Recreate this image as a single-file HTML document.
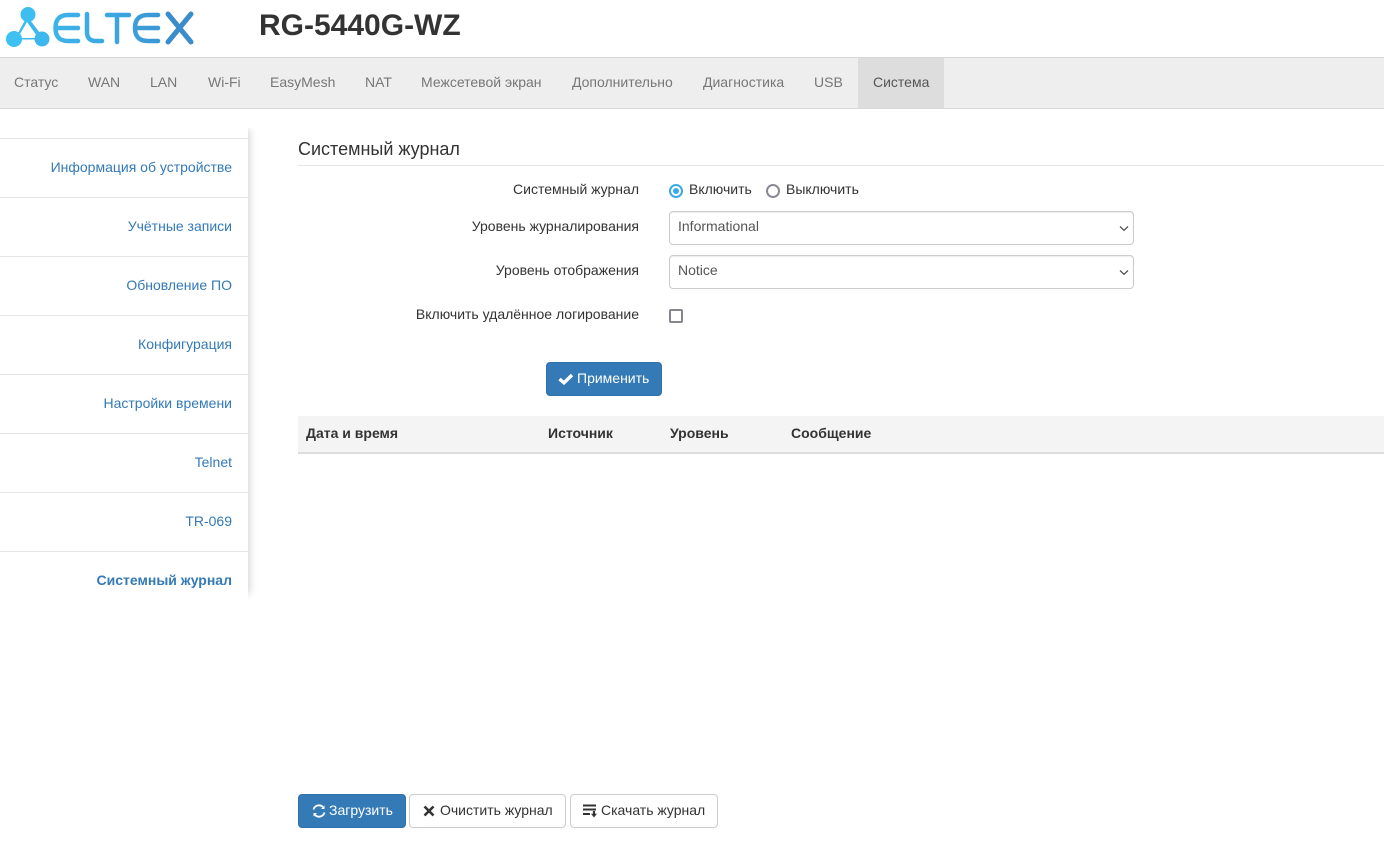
<!DOCTYPE html>
<html lang="ru"><head><meta charset="utf-8"><title>RG-5440G-WZ</title>
<style>
*{box-sizing:border-box}
html,body{margin:0;padding:0;background:#fff}
body{width:1384px;height:842px;position:relative;overflow:hidden;font:14px/20px "Liberation Sans",sans-serif;color:#333}
.a{position:absolute;white-space:nowrap}
h1{position:absolute;left:259px;top:9px;margin:0;font-size:30px;line-height:33px;font-weight:700;color:#333}
#nav{position:absolute;left:0;top:57px;width:1384px;height:52px;background:#eee;border-top:1px solid #d8d8d8;border-bottom:1px solid #d8d8d8}
#nav span{position:absolute;top:14px;color:#777}
#nav .on{top:0;left:858px;width:86px;height:50px;background:#ddd;color:#555;padding:14px 0 0 15px}
#side{position:absolute;left:0;top:128px;width:248px;height:473px;padding-top:10px;background:#fff;box-shadow:5px -3px 8px -4px rgba(0,0,0,.2);clip-path:inset(0 -20px 0 0)}
#side div{height:59px;border-top:1px solid #e5e5e5;text-align:right;padding:18px 16px 0 0;color:#337ab7}
#side div.on{font-weight:700}
.lbl{right:745px}
.sel{position:absolute;left:669px;width:465px;height:34px;border:1px solid #ccc;border-radius:4px;background:#fff;color:#555;padding:4px 8px;box-shadow:inset 0 1px 1px rgba(0,0,0,.075)}
.sel svg{position:absolute;right:4px;top:13px}
.btn{position:absolute;height:34px;border:1px solid #ccc;border-radius:4px;background:#fff;color:#333;line-height:20px;padding:5px 12px;white-space:nowrap}
.pri{background:#337ab7;border-color:#3071a9;color:#fff}
.btn svg{position:absolute}
</style></head><body>

<svg class="a" style="left:0;top:0" width="200" height="50" viewBox="0 0 200 50">
<defs><linearGradient id="g" gradientUnits="userSpaceOnUse" x1="0" y1="0" x2="195" y2="0"><stop offset="0" stop-color="#3cc0f2"/><stop offset=".6" stop-color="#3ba5e0"/><stop offset="1" stop-color="#3a8aca"/></linearGradient></defs>
<g fill="none" stroke="url(#g)">
<path stroke-width="4.500" stroke-linecap="round" d="M78 15H68Q55.500 15 55.500 28Q55.500 41 68 41H78M57 28H78"/>
<path stroke-width="4.500" stroke-linecap="round" d="M87 14V32Q87 41 96 41H102"/>
<path stroke-width="4.500" stroke-linecap="round" d="M107 15H129M117 15V42"/>
<path stroke-width="4.500" stroke-linecap="round" d="M158 15H148Q135 15 135 28Q135 41 148 41H158M136 28H158"/>
<path stroke-width="5" stroke-linecap="round" stroke="#3a8cca" d="M168 14L191 42M191 14L168 42"/>
</g>
<path d="M25 20L18 33L20 34L27 22z" fill="#3dbdf0"/>
<path d="M30 20L27 22L37 36L40 33z" fill="#3cb8ee"/>
<path d="M18 38H38V39.500H18z" fill="#3dbaf0"/>
<circle cx="28" cy="14.500" r="7.500" fill="#3dbdf0"/><circle cx="14" cy="39" r="8" fill="#3dc0f2"/><circle cx="42" cy="39" r="7.500" fill="#3db8ee"/>
</svg>
<h1>RG-5440G-WZ</h1>

<div id="nav">
<span style="left:14px">Статус</span><span style="left:88px">WAN</span><span style="left:150px">LAN</span><span style="left:208px">Wi-Fi</span><span style="left:270px">EasyMesh</span><span style="left:365px">NAT</span><span style="left:421px">Межсетевой экран</span><span style="left:572px">Дополнительно</span><span style="left:703px">Диагностика</span><span style="left:814px">USB</span><span class="on">Система</span>
</div>

<div id="side">
<div>Информация об устройстве</div><div>Учётные записи</div><div>Обновление ПО</div><div>Конфигурация</div><div>Настройки времени</div><div>Telnet</div><div>TR-069</div><div class="on">Системный журнал</div>
</div>

<div class="a" style="left:298px;top:139px;font-size:18px;line-height:20px;color:#333">Системный журнал</div>
<div class="a" style="left:298px;top:165px;width:1086px;height:1px;background:#e5e5e5"></div>

<div class="a lbl" style="top:179px">Системный журнал</div>
<svg class="a" style="left:669px;top:184px" width="14" height="14"><circle cx="7" cy="7" r="6" fill="#fff" stroke="#3ba9e4" stroke-width="2"/><circle cx="7" cy="7" r="3" fill="#3ba9e4"/></svg>
<div class="a" style="left:689px;top:179px">Включить</div>
<svg class="a" style="left:766px;top:184px" width="14" height="14"><circle cx="7" cy="7" r="6" fill="#fff" stroke="#8a8a96" stroke-width="2"/></svg>
<div class="a" style="left:786px;top:179px">Выключить</div>

<div class="a lbl" style="top:216px">Уровень журналирования</div>
<div class="sel" style="top:211px">Informational<svg width="10" height="7" viewBox="0 0 10 7"><path d="M1 1.500L5 5.300L9 1.500" fill="none" stroke="#555" stroke-width="1.300"/></svg></div>
<div class="a lbl" style="top:260px">Уровень отображения</div>
<div class="sel" style="top:255px">Notice<svg width="10" height="7" viewBox="0 0 10 7"><path d="M1 1.500L5 5.300L9 1.500" fill="none" stroke="#555" stroke-width="1.300"/></svg></div>
<div class="a lbl" style="top:304px">Включить удалённое логирование</div>
<div class="a" style="left:669px;top:309px;width:14px;height:14px;border:2px solid #85858f;border-radius:2px"></div>

<div class="btn pri" style="left:546px;top:362px;width:116px;padding-left:30px">
<svg style="left:11px;top:10px" width="16" height="12" viewBox="0 0 16 12"><path d="M1.500 6L6 9.800L14 2" fill="none" stroke="#fff" stroke-width="3.400"/></svg>Применить</div>

<div class="a" style="left:298px;top:416px;width:1086px;height:38px;background:#f4f4f4;border-bottom:2px solid #ddd;font-weight:700">
<span class="a" style="left:8px;top:7px">Дата и время</span><span class="a" style="left:250px;top:7px">Источник</span><span class="a" style="left:372px;top:7px">Уровень</span><span class="a" style="left:493px;top:7px">Сообщение</span>
</div>

<div class="btn pri" style="left:298px;top:794px;width:108px;padding-left:30px">
<svg style="left:13px;top:9px" width="14" height="14" viewBox="0 0 14 14"><path d="M1.500 5.500A5.700 5.700 0 0 1 11 3M12.500 8.500A5.700 5.700 0 0 1 3 11" fill="none" stroke="#fff" stroke-width="1.800"/><path d="M12.500 1.500V5H9z M1.500 12.500V9H5z" fill="#fff"/></svg>Загрузить</div>
<div class="btn" style="left:409px;top:794px;width:157px;padding-left:30px">
<svg style="left:13px;top:10px" width="12" height="12" viewBox="0 0 12 12"><path d="M1.500 1.500L10.500 10.500M10.500 1.500L1.500 10.500" fill="none" stroke="#333" stroke-width="2.600"/></svg>Очистить журнал</div>
<div class="btn" style="left:570px;top:794px;width:148px;padding-left:30px">
<svg style="left:12px;top:9px" width="15" height="14" viewBox="0 0 15 14"><path d="M0 1.500H13M0 5.500H13M0 10H7" fill="none" stroke="#333" stroke-width="2"/><path d="M11 7V11" stroke="#333" stroke-width="2.200"/><path d="M8 9.800H14L11 13.500z" fill="#333"/></svg>Скачать журнал</div>

</body></html>
